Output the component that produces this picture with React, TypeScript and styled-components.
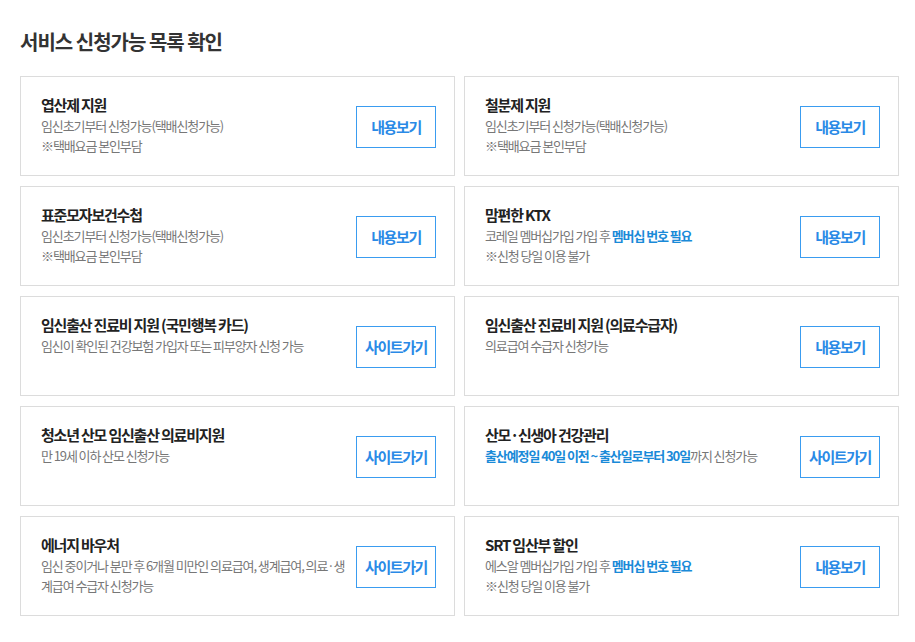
import React from "react";
import styled, { createGlobalStyle } from "styled-components";

const GlobalStyle = createGlobalStyle`
  html, body { margin: 0; padding: 0; background: #fff; }
  body { font-family: "Noto Sans CJK KR", "Noto Sans", sans-serif; }
  * { box-sizing: border-box; }
`;

const Page = styled.div`
  padding: 28px 20px 20px 20px;
  width: 915px;
`;

const Heading = styled.h2`
  margin: 0 0 20px 0;
  font-size: 20px;
  line-height: 28px;
  font-weight: 700;
  color: #333;
  letter-spacing: -1px;
`;

const Grid = styled.div`
  display: grid;
  grid-template-columns: 435px 435px;
  column-gap: 9px;
  row-gap: 10px;
`;

const Card = styled.div`
  height: 100px;
  border: 1px solid #dcdcdc;
  padding: 17px 18px 0 20px;
  display: flex;
  align-items: flex-start;
  gap: 10px;
`;

const Info = styled.div`
  flex: 1;
  min-width: 0;
`;

const Title = styled.div`
  font-size: 15px;
  line-height: 22px;
  font-weight: 700;
  color: #222;
  letter-spacing: -1.2px;
`;

const Desc = styled.div`
  font-size: 13px;
  line-height: 20px;
  color: #777;
  letter-spacing: -1.1px;
`;

const Strong = styled.span`
  color: #1a8ad8;
  font-weight: 700;
`;

const Button = styled.a`
  flex: none;
  align-self: center;
  margin-top: -16px;
  width: 80px;
  height: 42px;
  border: 1px solid #3a9cf0;
  color: #2a8ae6;
  font-size: 15px;
  font-weight: 700;
  letter-spacing: -1.4px;
  display: flex;
  align-items: center;
  justify-content: center;
  text-decoration: none;
  background: #fff;
`;

type Item = { title: string; lines: React.ReactNode[]; btn: string };

const items: Item[] = [
  { title: "엽산제 지원", lines: ["임신초기부터 신청가능(택배신청가능)", "※택배요금 본인부담"], btn: "내용보기" },
  { title: "철분제 지원", lines: ["임신초기부터 신청가능(택배신청가능)", "※택배요금 본인부담"], btn: "내용보기" },
  { title: "표준모자보건수첩", lines: ["임신초기부터 신청가능(택배신청가능)", "※택배요금 본인부담"], btn: "내용보기" },
  {
    title: "맘편한 KTX",
    lines: [<>코레일 멤버십가입 가입 후 <Strong>멤버십 번호 필요</Strong></>, "※신청 당일 이용 불가"],
    btn: "내용보기",
  },
  { title: "임신출산 진료비 지원 (국민행복 카드)", lines: ["임신이 확인된 건강보험 가입자 또는 피부양자 신청 가능"], btn: "사이트가기" },
  { title: "임신출산 진료비 지원 (의료수급자)", lines: ["의료급여 수급자 신청가능"], btn: "내용보기" },
  { title: "청소년 산모 임신출산 의료비지원", lines: ["만 19세 이하 산모 신청가능"], btn: "사이트가기" },
  {
    title: "산모·신생아 건강관리",
    lines: [<><Strong>출산예정일 40일 이전 ~ 출산일로부터 30일</Strong>까지 신청가능</>],
    btn: "사이트가기",
  },
  {
    title: "에너지 바우처",
    lines: ["임신 중이거나 분만 후 6개월 미만인 의료급여, 생계급여, 의료·생계급여 수급자 신청가능"],
    btn: "사이트가기",
  },
  {
    title: "SRT 임산부 할인",
    lines: [<>에스알 멤버십가입 가입 후 <Strong>멤버십 번호 필요</Strong></>, "※신청 당일 이용 불가"],
    btn: "내용보기",
  },
];

export default function App() {
  return (
    <>
      <GlobalStyle />
      <Page>
        <Heading>서비스 신청가능 목록 확인</Heading>
        <Grid>
          {items.map((it, i) => (
            <Card key={i}>
              <Info>
                <Title>{it.title}</Title>
                {it.lines.map((l, j) => (
                  <Desc key={j}>{l}</Desc>
                ))}
              </Info>
              <Button href="#">{it.btn}</Button>
            </Card>
          ))}
        </Grid>
      </Page>
    </>
  );
}
